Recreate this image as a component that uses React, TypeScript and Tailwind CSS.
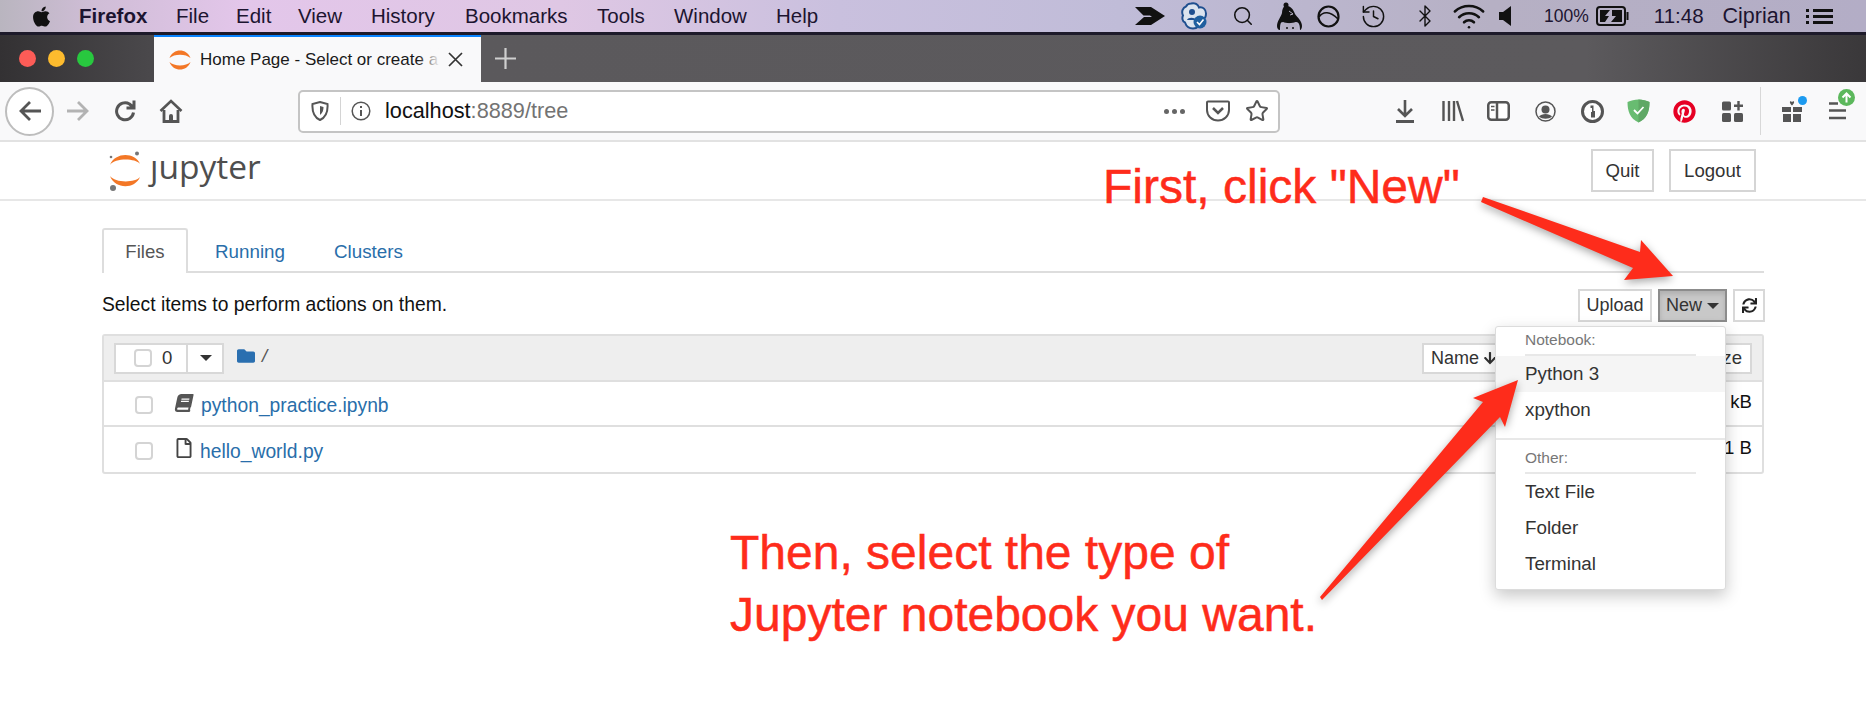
import { Bluetooth, History, Search, Star, Wifi } from "lucide-react";
import { FaApple, FaArrowDown, FaBook, FaFolder, FaPinterest, FaRegFile, FaSync } from "react-icons/fa";

const menuItems = [
  { label: "File", w: "w-[60px]" },
  { label: "Edit", w: "w-[62px]" },
  { label: "View", w: "w-[73px]" },
  { label: "History", w: "w-[94px]" },
  { label: "Bookmarks", w: "w-[132px]" },
  { label: "Tools", w: "w-[77px]" },
  { label: "Window", w: "w-[102px]" },
  { label: "Help", w: "w-[60px]" },
];

function JupyterMark() {
  return (
    <svg width="34" height="40" viewBox="0 0 34 40" className="shrink-0">
      <path d="M2 14 C7 1 27 1 32 13 C27 7 7 7 2 14Z" fill="#f37726" />
      <path d="M2 25 C7 38.500 27 38.500 32 26 C27 32 7 32 2 25Z" fill="#f37726" />
      <circle cx="29" cy="2.500" r="2" fill="#767677" />
      <circle cx="3" cy="6" r="1.300" fill="#767677" />
      <circle cx="5" cy="37" r="3" fill="#767677" />
    </svg>
  );
}

function TabFavicon() {
  return (
    <svg width="22" height="22" viewBox="0 0 22 22" className="shrink-0">
      <path d="M0.500 9 C4 -1 18 -1 21.500 9 C17 4.500 5 4.500 0.500 9Z" fill="#f37726" />
      <path d="M0.500 13 C4 23 18 23 21.500 13 C17 17.500 5 17.500 0.500 13Z" fill="#f37726" />
    </svg>
  );
}

function MenuBar() {
  return (
    <div className="flex h-[32px] items-center bg-[linear-gradient(90deg,#b9b5bf_0%,#cfbdd6_5%,#e3c6ea_13%,#dfc7e4_30%,#c9c0de_45%,#c0bcd8_60%,#b6b0c4_80%,#b3adc6_100%)] text-[#1c1430]">
      <div className="ml-[30px] w-[49px]">
        <FaApple className="text-[23px] text-[#111]" />
      </div>
      <span className="w-[97px] text-[20.5px] font-bold">Firefox</span>
      {menuItems.map((m) => (
        <span key={m.label} className={`${m.w} text-[20.5px]`}>
          {m.label}
        </span>
      ))}
      <div className="ml-[299px] flex items-center">
        <svg width="30" height="20" viewBox="0 0 30 20" className="mr-[16px]">
          <path d="M0 1h16l14 9-14 9H0l9-8h8l-2-1.500H8.500z" fill="#111" />
        </svg>
        <svg width="27" height="28" viewBox="0 0 27 28" className="mr-[24px]">
          <path d="M10 1.500c4-1 7 1 8 4 4-1 7 2 7 6 0 3-1 5-3 6-1 5-5 9-10 9-5 0-7-3-8-6-3-1-3-5-2-7-2-4 0-8 3-9 1-2 3-3 5-3z" fill="#dbe3ee" stroke="#1f4f8f" strokeWidth="2" />
          <circle cx="11" cy="10" r="3" fill="#1f4f8f" />
          <path d="M6 18c1-3 8-3 9 0z" fill="#1f4f8f" />
          <circle cx="19" cy="20" r="6.500" fill="#1f5f9f" />
          <path d="M16 20l2.500 2.500L22.500 17.500" fill="none" stroke="#fff" strokeWidth="1.600" />
        </svg>
        <Search className="mr-[23px] h-[22px] w-[22px]" strokeWidth={1.7} color="#111" />
        <svg width="26" height="28" viewBox="0 0 26 28" className="mr-[14px]">
          <circle cx="9" cy="3" r="2.500" fill="#111" />
          <path d="M8 4c5-1 8 3 10 8 2 3 7 7 7 12 0 2-1 4-2 4 0-5-1-8-4-8-3 2-10 2-14 0-2 1-2 4-2 8-2 0-3-2-3-4 0-5 4-9 5-13 0-3 1-6 3-7z" fill="#111" />
          <path d="M6 20c3 1.500 9 1.500 13 0 1 1 2 4 2 8H4c0-4 1-7 2-8z" fill="#b6b0c4" />
          <path d="M12 9l4 3-3 1" fill="none" stroke="#b6b0c4" strokeWidth="1" />
          <circle cx="10" cy="26" r="1" fill="#111" />
          <circle cx="16" cy="26" r="1" fill="#111" />
        </svg>
        <svg width="23" height="23" viewBox="0 0 23 23" className="mr-[20px]">
          <circle cx="11.500" cy="11.500" r="10" fill="none" stroke="#111" strokeWidth="2.200" />
          <path d="M2 12c4-6 11-6 19 2" fill="none" stroke="#111" strokeWidth="1.500" />
        </svg>
        <History className="mr-[26px] h-[27px] w-[27px]" strokeWidth={1.3} color="#111" />
        <Bluetooth className="mr-[15px] h-[24px] w-[24px]" strokeWidth={1.4} color="#111" />
        <Wifi className="mr-[13px] h-[34px] w-[34px]" strokeWidth={1.800} color="#111" />
        <svg width="12" height="20" viewBox="0 0 12 20" className="mr-[33px]">
          <path d="M0 6h4l8-6v20l-8-6H0z" fill="#111" />
        </svg>
        <span className="mr-[7px] text-[17.5px]">100%</span>
        <svg width="33" height="20" viewBox="0 0 33 20" className="mr-[25px]">
          <rect x="1" y="1" width="28" height="18" rx="3" fill="none" stroke="#111" strokeWidth="2" />
          <rect x="30.500" y="6" width="2" height="8" fill="#111" />
          <path d="M4 4h10l-5 6h4l-4 6H4zM16 4h10v12H15l5-6h-4z" fill="#111" />
        </svg>
        <span className="mr-[19px] text-[20.5px]">11:48</span>
        <span className="mr-[15px] text-[21.5px]">Ciprian</span>
        <svg width="27" height="19" viewBox="0 0 27 19">
          <path d="M0 2h3v3H0zM7 2h20v3H7zM0 8h3v3H0zM7 8h20v3H7zM0 14h3v3H0zM7 14h20v3H7z" fill="#111" />
        </svg>
      </div>
    </div>
  );
}

function TabBar() {
  return (
    <div className="flex h-[50px] items-stretch border-t-[3px] border-[#1d1a2a] bg-[linear-gradient(90deg,#333133_0%,#4a484b_8%,#5b595c_25%,#5c5a5d_85%,#3a383a_100%)]">
      <div className="flex w-[154px] items-center pl-[19px]">
        <div className="flex gap-[12px]">
          <span className="h-[17px] w-[17px] rounded-full bg-[#fc5c57]" />
          <span className="h-[17px] w-[17px] rounded-full bg-[#fdbb2e]" />
          <span className="h-[17px] w-[17px] rounded-full bg-[#28c83f]" />
        </div>
      </div>
      <div className="flex w-[327px] items-center border-t-[2px] border-[#0a84ff] bg-[#f9f9fa] pl-[15px]">
        <TabFavicon />
        <span className="relative ml-[9px] h-[24px] w-[240px] overflow-hidden whitespace-nowrap text-[17px] leading-[24px] text-[#1a1a1a]">
          Home Page - Select or create a
          <span className="absolute inset-y-0 right-0 w-[22px] bg-gradient-to-r from-transparent to-[#f9f9fa]" />
        </span>
        <svg width="15" height="15" viewBox="0 0 15 15" className="ml-[8px]">
          <path d="M1 1l13 13M14 1L1 14" stroke="#333" strokeWidth="1.700" />
        </svg>
      </div>
      <div className="flex items-center pl-[14px]">
        <svg width="21" height="21" viewBox="0 0 21 21">
          <path d="M10.500 0v21M0 10.500h21" stroke="#cfcfcf" strokeWidth="2.200" />
        </svg>
      </div>
    </div>
  );
}

function UrlBar() {
  return (
    <div className="ml-[115px] flex h-[43px] w-[982px] items-center rounded-[5px] border-2 border-[#c4c4c4] bg-white">
      <svg width="18" height="20" viewBox="0 0 18 20" className="ml-[11px]">
        <path d="M9 1l7.500 2c.5 7-1 13-7.500 16C2.500 16 1 10 1.500 3z" fill="none" stroke="#555" strokeWidth="2" />
        <path d="M9 5l3.500 1c0 3-.8 6-3.500 8z" fill="#555" />
      </svg>
      <span className="ml-[11px] h-[28px] w-px bg-[#d4d4d4]" />
      <svg width="20" height="20" viewBox="0 0 20 20" className="ml-[10px]">
        <circle cx="10" cy="10" r="8.800" fill="none" stroke="#555" strokeWidth="1.500" />
        <path d="M10 9v6M10 5v2" stroke="#555" strokeWidth="2" />
      </svg>
      <span className="ml-[14px] text-[21.7px] text-[#111]">
        localhost<span className="text-[#737373]">:8889/tree</span>
      </span>
      <div className="ml-auto flex items-center">
        <span className="flex gap-[3px]">
          <span className="h-[5px] w-[5px] rounded-full bg-[#666]" />
          <span className="h-[5px] w-[5px] rounded-full bg-[#666]" />
          <span className="h-[5px] w-[5px] rounded-full bg-[#666]" />
        </span>
        <svg width="24" height="22" viewBox="0 0 24 22" className="ml-[21px]">
          <path d="M2 1.500h20a1 1 0 0 1 1 1V10c0 6-5 10.500-11 10.500S1 16 1 10V2.500a1 1 0 0 1 1-1z" fill="none" stroke="#555" strokeWidth="2" />
          <path d="M7 8l5 5 5-5" fill="none" stroke="#555" strokeWidth="2.500" />
        </svg>
        <Star className="ml-[15px] mr-[9px] h-[24px] w-[24px]" strokeWidth={2} color="#555" />
      </div>
    </div>
  );
}

function NavBar() {
  return (
    <div className="flex h-[60px] items-center border-b-2 border-[#e2e2e2] bg-[#f9f9fa]">
      <div className="ml-[5px] flex h-[49px] w-[49px] items-center justify-center rounded-full border-2 border-[#bdbdbd] bg-white">
        <svg width="24" height="22" viewBox="0 0 24 22">
          <path d="M23 11H3M12 2l-9 9 9 9" fill="none" stroke="#555" strokeWidth="2.800" />
        </svg>
      </div>
      <svg width="24" height="22" viewBox="0 0 24 22" className="ml-[12px]">
        <path d="M1 11h20M12 2l9 9-9 9" fill="none" stroke="#b3b3b3" strokeWidth="2.800" />
      </svg>
      <svg width="22" height="22" viewBox="0 0 22 22" className="ml-[24px]">
        <path d="M19.500 12.500A8.500 8.500 0 1 1 15.500 4l3.500 3M20 0.500v7.500h-7.500" fill="none" stroke="#555" strokeWidth="3" />
      </svg>
      <svg width="24" height="24" viewBox="0 0 24 24" className="ml-[23px]">
        <path d="M1.500 12L12 2l10.500 10" fill="none" stroke="#555" strokeWidth="2.600" />
        <path d="M5 11v11.500h14V11" fill="none" stroke="#555" strokeWidth="2.800" />
        <path d="M10 23v-6a2 2 0 0 1 4 0v6z" fill="#555" />
      </svg>
      <UrlBar />
      <div className="ml-[116px] flex items-center">
        <svg width="18" height="23" viewBox="0 0 18 23">
          <path d="M9 0v15M2 9l7 7 7-7" fill="none" stroke="#555" strokeWidth="2.600" />
          <path d="M0 21.500h18" stroke="#555" strokeWidth="3" />
        </svg>
        <svg width="22" height="22" viewBox="0 0 22 22" className="ml-[28px]">
          <path d="M1.500 1v20M7 1v20M12 1v20M15 1l6 20" stroke="#555" strokeWidth="2.400" />
        </svg>
        <svg width="23" height="20" viewBox="0 0 23 20" className="ml-[23px]">
          <rect x="1.250" y="1.250" width="20.500" height="17.500" rx="3" fill="#fff" stroke="#555" strokeWidth="2.500" />
          <path d="M10 1v18" stroke="#555" strokeWidth="2.500" />
          <path d="M4 5.500h3.500M4 9h3.500" stroke="#555" strokeWidth="1.600" />
        </svg>
        <svg width="21" height="21" viewBox="0 0 21 21" className="ml-[25px]">
          <circle cx="10.500" cy="10.500" r="9.500" fill="none" stroke="#555" strokeWidth="1.500" />
          <circle cx="10.500" cy="8.500" r="4" fill="#555" />
          <path d="M4 15.500c2.500-3.500 10.500-3.500 13 0-3 3-10 3-13 0z" fill="#555" />
        </svg>
        <svg width="23" height="23" viewBox="0 0 23 23" className="ml-[25px]">
          <circle cx="11.500" cy="11.500" r="10" fill="#fdfdfd" stroke="#555" strokeWidth="3" />
          <path d="M9.500 5.500h3v5.500h1.500v6.500h-4V12h1V8h-1.500z" fill="#555" />
        </svg>
        <svg width="23" height="24" viewBox="0 0 23 24" className="ml-[23px]">
          <path d="M11.500 0.500c4 0 7.500 1 11 2.500 0 9-2.500 16.500-11 20.500C3 19.500 0.500 12 0.500 3c3.500-1.500 7-2.500 11-2.500z" fill="#68bc71" />
          <path d="M11.500 0.500c4 0 7.500 1 11 2.500 0 9-2.500 16.500-11 20.500z" fill="#5fa865" />
          <path d="M7 11l3.500 3.500L16.500 8" fill="none" stroke="#fff" strokeWidth="1.800" />
        </svg>
        <FaPinterest className="ml-[23px] text-[23px] text-[#e60023]" />
        <svg width="21" height="21" viewBox="0 0 21 21" className="ml-[26px]">
          <rect x="0" y="0.500" width="9" height="9" rx="1.500" fill="#555" />
          <rect x="0" y="12" width="9" height="9" rx="1.500" fill="#555" />
          <rect x="12" y="12" width="9" height="9" rx="1.500" fill="#555" />
          <path d="M16.500 0v9.500M12 4.750h9" stroke="#555" strokeWidth="2.400" />
        </svg>
        <span className="ml-[17px] h-[48px] w-px bg-[#d8d8d8]" />
        <div className="relative ml-[21px]">
          <svg width="20" height="22" viewBox="0 0 20 22" className="block">
            <path d="M0 7h9v5H0zM11 7h9v5h-9zM1 14h8v8H1zM11 14h8v8h-8z" fill="#555" />
            <path d="M10 5.500C6.500 2.500 8 0 10 2c2-2 3.500 .5 0 3.500z" fill="#555" />
          </svg>
          <span className="absolute right-[-5px] top-[-4px] h-[9px] w-[9px] rounded-full bg-[#1d9bf0]" />
        </div>
        <div className="relative ml-[27px]">
          <svg width="17" height="18" viewBox="0 0 17 18" className="block">
            <path d="M0 1.500h9M0 8.500h17M0 16h17" stroke="#555" strokeWidth="2.600" />
          </svg>
          <span className="absolute right-[-9px] top-[-13px] flex h-[17px] w-[17px] items-center justify-center rounded-full bg-[#5cb85c]">
            <svg width="11" height="11" viewBox="0 0 11 11">
              <path d="M5.500 10.500V1.500M1.500 5.500l4-4 4 4" fill="none" stroke="#fff" strokeWidth="2" />
            </svg>
          </span>
        </div>
      </div>
    </div>
  );
}

function JupyterHeader() {
  return (
    <div className="flex h-[59px] items-center border-b-2 border-[#e7e7e7] bg-white text-[18.6px] text-[#333]">
      <div className="ml-[108px] flex items-center">
        <JupyterMark />
        <span className="mb-[8px] ml-[8px] font-['Open_Sans',sans-serif] text-[33.500px] leading-none text-[#4e4e4e]">
          ȷupyter
        </span>
      </div>
      <button className="ml-auto flex h-[43px] w-[63px] items-center justify-center border-2 border-[#d5d5d5]">
        Quit
      </button>
      <button className="ml-[15px] mr-[110px] flex h-[43px] w-[87px] items-center justify-center border-2 border-[#d5d5d5]">
        Logout
      </button>
    </div>
  );
}

function FileRow({ name, size, book, last }: { name: string; size: string; book?: boolean; last?: boolean }) {
  return (
    <div className={`flex h-[45px] items-center pt-[3px] text-[19.3px] ${last ? "" : "border-b-2 border-[#dfdfdf]"}`}>
      <span className="ml-[31px] h-[18px] w-[18px] rounded-[4px] border-2 border-[#d4d4d4] bg-white" />
      {book ? (
        <FaBook className="mb-[4px] ml-[22px] h-[18px] w-[18px] -skew-x-12 text-[#555]" />
      ) : (
        <FaRegFile className="mb-[6px] ml-[22px] h-[20px] w-[18px] text-[#444]" />
      )}
      <span className={`${book ? "ml-[8px]" : "ml-[7px]"} mt-[2px] text-[#296eaa]`}>{name}</span>
      <span className="mb-[6px] ml-auto mr-[10px] text-[18.6px] text-[#111]">{size}</span>
    </div>
  );
}

function FileList() {
  return (
    <div className="mx-[102px] mt-[27px] text-[18.6px]">
      <div className="relative flex h-[45px] items-end border-b-2 border-[#ddd]">
        <div className="mb-[-2px] flex h-[45px] w-[86px] items-center justify-center rounded-t-[3px] border-2 border-b-0 border-[#ddd] bg-white text-[#555]">
          Files
        </div>
        <span className="mb-[5px] ml-[27px] text-[18.8px] text-[#296eaa]">Running</span>
        <span className="mb-[5px] ml-[49px] text-[18.8px] text-[#296eaa]">Clusters</span>
      </div>
      <div className="flex h-[61px] items-center pt-[4px]">
        <span className="text-[19.3px] text-[#111]">Select items to perform actions on them.</span>
        <button className="ml-auto flex h-[33px] w-[74px] items-center justify-center border-2 border-[#d8d8d8] text-[18px] text-[#333]">
          Upload
        </button>
        <button className="ml-[6px] flex h-[33px] w-[69px] items-center justify-center gap-[5px] border-2 border-[#8c8c8c] bg-[#c8c8c8] text-[18px] text-[#333] shadow-[inset_0_3px_5px_rgba(0,0,0,0.125)]">
          New
          <span className="h-0 w-0 border-x-[6px] border-t-[6px] border-x-transparent border-t-[#333]" />
        </button>
        <button className="ml-[6px] mr-[-1px] flex h-[33px] w-[32px] items-center justify-center border-2 border-[#d8d8d8] text-[#222]">
          <FaSync className="text-[15px]" />
        </button>
      </div>
      <div className="rounded-[3px] border-2 border-[#dfdfdf]">
        <div className="flex h-[46px] items-center border-b-2 border-[#dfdfdf] bg-[#eeeeee] pl-[10px] pr-[10px]">
          <div className="flex h-[31px] w-[110px] items-center border-2 border-[#d8d8d8] bg-white">
            <span className="ml-[18px] h-[18px] w-[18px] rounded-[4px] border-2 border-[#d4d4d4]" />
            <span className="ml-[10px] text-[#333]">0</span>
            <span className="ml-[14px] h-full w-[2px] bg-[#d8d8d8]" />
            <span className="ml-[12px] h-0 w-0 border-x-[6px] border-t-[6px] border-x-transparent border-t-[#333]" />
          </div>
          <FaFolder className="mb-[4px] ml-[13px] text-[18px] text-[#2a6fb0]" />
          <span className="mb-[5px] ml-[7px] italic text-[#555]">/</span>
          <div className="ml-auto flex h-[31px] w-[100px] items-center gap-[4px] border-2 border-[#d8d8d8] bg-white pl-[7px] text-[18px] text-[#333]">
            Name
            <FaArrowDown className="text-[14px]" />
          </div>
          <div className="ml-[130px] flex h-[31px] w-[100px] items-center justify-end border-2 border-[#d8d8d8] bg-white pr-[8px] text-[#333]">
            Size
          </div>
        </div>
        <FileRow name="python_practice.ipynb" size="10 kB" book />
        <FileRow name="hello_world.py" size="21 B" last />
      </div>
    </div>
  );
}

function DropdownItem({ label, active }: { label: string; active?: boolean }) {
  return (
    <div className={`flex h-[36px] items-center pl-[29px] text-[18.8px] text-[#333] ${active ? "bg-[#f5f5f5]" : ""}`}>
      {label}
    </div>
  );
}

function DropdownHeader({ label }: { label: string }) {
  return (
    <div className="mx-[29px] border-b-2 border-[#e8e8e8] pb-[4px] text-[15.500px] leading-[20px] text-[#777]">
      {label}
    </div>
  );
}

function NewMenu() {
  return (
    <div className="absolute left-[1495px] top-[326px] h-[264px] w-[231px] rounded-[3px] border border-[#dcdcdc] bg-white pt-[3px] shadow-[0_6px_16px_rgba(0,0,0,0.22)]">
      <DropdownHeader label="Notebook:" />
      <DropdownItem label="Python 3" active />
      <DropdownItem label="xpython" />
      <div className="mt-[10px] h-[2px] bg-[#e8e8e8]" />
      <div className="pt-[8px]">
        <DropdownHeader label="Other:" />
      </div>
      <DropdownItem label="Text File" />
      <DropdownItem label="Folder" />
      <DropdownItem label="Terminal" />
    </div>
  );
}

function Annotations() {
  return (
    <>
      <span className="absolute left-[1103px] top-[158px] text-[48px] leading-[58px] text-[#fe2c1b] [-webkit-text-stroke:0.5px_#fe2c1b]">
        First, click "New"
      </span>
      <div className="absolute left-[730px] top-[522px] text-[48px] leading-[62px] text-[#fe2c1b] [-webkit-text-stroke:0.5px_#fe2c1b]">
        <div>Then, select the type of</div>
        <div>Jupyter notebook you want.</div>
      </div>
      <svg
        width="1866"
        height="724"
        viewBox="0 0 1866 724"
        className="pointer-events-none absolute left-0 top-0 drop-shadow-[0_3px_4px_rgba(0,0,0,0.35)]"
      >
        <path d="M1483 197 L1640 252 L1641 240 L1673 276 L1624 280 L1633 268 L1481 202 Z" fill="#fe2c1b" />
        <path d="M1518 380 L1473 398 L1483 402 L1320 597 L1322 600 L1500 417 L1505 427 Z" fill="#fe2c1b" />
      </svg>
    </>
  );
}

export default function App() {
  return (
    <div className="relative h-[724px] w-[1866px] overflow-hidden bg-white font-['Liberation_Sans',Arial,sans-serif]">
      <MenuBar />
      <TabBar />
      <NavBar />
      <JupyterHeader />
      <FileList />
      <NewMenu />
      <Annotations />
    </div>
  );
}
